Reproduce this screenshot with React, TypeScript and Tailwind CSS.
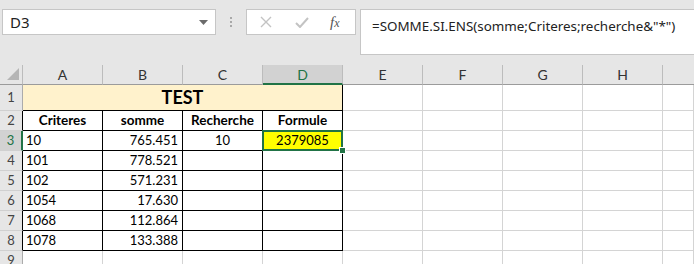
import React from "react";

const cellFont = { fontFamily: "Lato, 'Open Sans', sans-serif" };

const rows: { a: string; b: string; c: string; d: string }[] = [
  { a: "10", b: "765.451", c: "10", d: "2379085" },
  { a: "101", b: "778.521", c: "", d: "" },
  { a: "102", b: "571.231", c: "", d: "" },
  { a: "1054", b: "17.630", c: "", d: "" },
  { a: "1068", b: "112.864", c: "", d: "" },
  { a: "1078", b: "133.388", c: "", d: "" },
];

const cols = ["A", "B", "C", "D", "E", "F", "G", "H"];

function RowHeader({ n, black, selected }: { n: number; black?: boolean; selected?: boolean }) {
  return (
    <div
      className={
        "flex items-center justify-center border-b border-b-[#d0d0d0] border-r text-[13px] " +
        (selected
          ? "bg-[#d2d2d2] border-r-2 border-r-[#217346] text-[#217346]"
          : "bg-[#e6e6e6] text-[#444444] " + (black ? "border-r-black" : "border-r-[#ababab]"))
      }
      style={cellFont}
    >
      {n}
    </div>
  );
}

function EmptyCells({ count }: { count: number }) {
  return (
    <>
      {Array.from({ length: count }).map((_, i) => (
        <div key={i} className="border-r border-b border-[#d4d4d4] bg-white" />
      ))}
    </>
  );
}

export default function App() {
  return (
    <div className="w-[694px] h-[264px] overflow-hidden bg-[#e6e6e6] select-none">
      {/* Formula bar */}
      <div className="h-[65px] flex items-start pt-[9px] pl-[2px]">
        <div className="w-[214px] h-[26px] bg-white border border-[#c6c6c6] flex items-center justify-between pl-[7px] pr-[7px]">
          <span className="text-[15px] text-[#222222] leading-none" style={{ fontFamily: "'Noto Sans', sans-serif" }}>
            D3
          </span>
          <svg width="9" height="5" viewBox="0 0 9 5">
            <polygon points="0,0 9,0 4.5,5" fill="#6b6b6b" />
          </svg>
        </div>
        <div className="w-[30px] h-[26px] flex flex-col items-center justify-center gap-[2px]">
          <div className="w-[2px] h-[2px] bg-[#a8a8a8]" />
          <div className="w-[2px] h-[2px] bg-[#a8a8a8]" />
          <div className="w-[2px] h-[2px] bg-[#a8a8a8]" />
        </div>
        <div className="w-[110px] h-[26px] bg-white border border-[#c6c6c6] flex items-center">
          <svg width="12" height="12" viewBox="0 0 12 12" className="ml-[13px]">
            <path d="M1 1 L11 11 M11 1 L1 11" stroke="#c3c3c3" strokeWidth="1.4" />
          </svg>
          <svg width="14" height="11" viewBox="0 0 14 11" className="ml-[23px]">
            <path d="M1 6 L5 10 L13 1" stroke="#c3c3c3" strokeWidth="2" fill="none" />
          </svg>
          <span
            className="ml-[21px] text-[15px] italic text-[#555555] leading-none"
            style={{ fontFamily: "'Liberation Serif', serif" }}
          >
            f<span className="text-[12px]">x</span>
          </span>
        </div>
        <div className="ml-[4px] flex-1 h-[46px] bg-white border border-[#c6c6c6] border-r-0 pl-[11px] pt-[3px]">
          <span className="text-[13.4px] text-[#222222] whitespace-nowrap" style={{ fontFamily: "'Noto Sans', sans-serif" }}>
            =SOMME.SI.ENS(somme;Criteres;recherche&amp;"*")
          </span>
        </div>
      </div>

      {/* Grid */}
      <div
        className="grid grid-cols-[23px_repeat(8,80px)_1fr] grid-rows-[20px_26px_repeat(8,20px)]"
        style={cellFont}
      >
        {/* header row */}
        <div className="relative bg-[#e6e6e6] border-r border-b border-r-[#bcbcbc] border-b-[#9b9b9b]">
          <svg width="12" height="12" viewBox="0 0 12 12" className="absolute left-[7px] top-[3px]">
            <polygon points="12,0 12,12 0,12" fill="#b5b5b5" />
          </svg>
        </div>
        {cols.map((c) =>
          c === "D" ? (
            <div
              key={c}
              className="flex items-center justify-center bg-[#d2d2d2] border-r border-r-[#bcbcbc] border-b-2 border-b-[#217346] text-[14px] text-[#217346]"
            >
              {c}
            </div>
          ) : (
            <div
              key={c}
              className="flex items-center justify-center bg-[#e6e6e6] border-r border-r-[#bcbcbc] border-b border-b-[#9b9b9b] text-[14px] text-[#333333]"
            >
              {c}
            </div>
          )
        )}
        <div className="bg-[#e6e6e6] border-b border-b-[#9b9b9b]" />

        {/* row 1 */}
        <RowHeader n={1} />
        <div className="col-span-4 flex items-center justify-center bg-[#fff2cc] border-r border-b border-black text-[18px] font-bold text-black">
          TEST
        </div>
        <EmptyCells count={5} />

        {/* row 2 */}
        <RowHeader n={2} black />
        {["Criteres", "somme", "Recherche", "Formule"].map((h) => (
          <div
            key={h}
            className="flex items-center justify-center border-r border-b border-black bg-white text-[13.5px] font-bold text-black"
          >
            {h}
          </div>
        ))}
        <EmptyCells count={5} />

        {/* data rows */}
        {rows.map((r, i) => (
          <React.Fragment key={i}>
            <RowHeader n={i + 3} black selected={i === 0} />
            <div className="flex items-center pl-[3px] border-r border-b border-black bg-white text-[13px] text-black">
              {r.a}
            </div>
            <div className="flex items-center justify-end pr-[4px] border-r border-b border-black bg-white text-[13px] text-black">
              {r.b}
            </div>
            <div className="flex items-center justify-center border-r border-b border-black bg-white text-[13px] text-black">
              {r.c}
            </div>
            {i === 0 ? (
              <div className="relative border-r border-b border-black bg-white">
                <div className="absolute left-[-1px] top-[-1px] right-[-1px] bottom-[-1px] border-2 border-[#217346] bg-[#ffff00] flex items-center justify-center text-[13px] text-black">
                  {r.d}
                </div>
                <div className="absolute right-[-4px] bottom-[-4px] w-[7px] h-[7px] bg-[#217346] border border-white" />
              </div>
            ) : (
              <div className="border-r border-b border-black bg-white" />
            )}
            <EmptyCells count={5} />
          </React.Fragment>
        ))}

        {/* row 9 */}
        <RowHeader n={9} />
        <EmptyCells count={9} />
      </div>
    </div>
  );
}
